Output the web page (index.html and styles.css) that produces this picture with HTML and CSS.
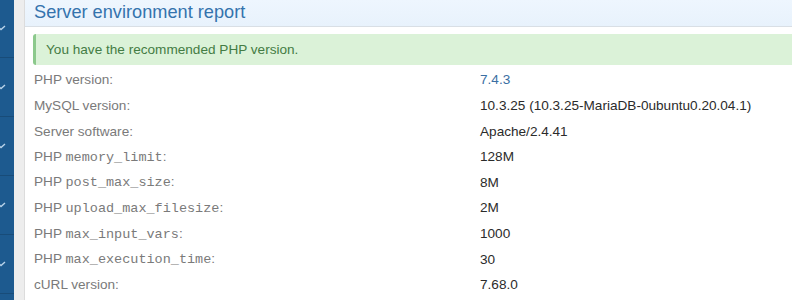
FILE: index.html
```html
<!DOCTYPE html>
<html>
<head>
<meta charset="utf-8">
<link rel="stylesheet" href="styles.css">
</head>
<body>
<div class="page">
  <nav class="sidebar">
    <div class="nav-item"><svg class="chev" viewBox="0 0 8 6"><polyline points="-3,1 1,4.5 5,1"/></svg></div>
    <div class="nav-item"><svg class="chev" viewBox="0 0 8 6"><polyline points="-3,1 1,4.5 5,1"/></svg></div>
    <div class="nav-item"><svg class="chev" viewBox="0 0 8 6"><polyline points="-3,1 1,4.5 5,1"/></svg></div>
    <div class="nav-item"><svg class="chev" viewBox="0 0 8 6"><polyline points="-3,1 1,4.5 5,1"/></svg></div>
    <div class="nav-item"><svg class="chev" viewBox="0 0 8 6"><polyline points="-3,1 1,4.5 5,1"/></svg></div>
  </nav>
  <div class="gutter"></div>
  <main class="panel">
    <h1 class="panel-title">Server environment report</h1>
    <div class="alert">You have the recommended PHP version.</div>
    <div class="report">
      <div class="label">PHP version:</div><div class="value link">7.4.3</div>
      <div class="label">MySQL version:</div><div class="value">10.3.25 (10.3.25-MariaDB-0ubuntu0.20.04.1)</div>
      <div class="label">Server software:</div><div class="value">Apache/2.4.41</div>
      <div class="label">PHP <code>memory_limit</code>:</div><div class="value">128M</div>
      <div class="label">PHP <code>post_max_size</code>:</div><div class="value">8M</div>
      <div class="label">PHP <code>upload_max_filesize</code>:</div><div class="value">2M</div>
      <div class="label">PHP <code>max_input_vars</code>:</div><div class="value">1000</div>
      <div class="label">PHP <code>max_execution_time</code>:</div><div class="value">30</div>
      <div class="label">cURL version:</div><div class="value">7.68.0</div>
    </div>
  </main>
</div>
</body>
</html>
```

FILE: styles.css
```css
html, body {
  margin: 0;
  padding: 0;
  background: #fff;
}
body {
  font-family: "Liberation Sans", Arial, sans-serif;
  overflow: hidden;
}
.page {
  display: flex;
  height: 300px;
}
.sidebar {
  width: 14px;
  flex: none;
  background: #1d5a8f;
  display: flex;
  flex-direction: column;
  margin-top: -1px;
}
.nav-item {
  height: 58px;
  flex: none;
  border-bottom: 1px solid #184c79;
  display: flex;
  align-items: center;
}
.chev {
  width: 8px;
  height: 6px;
  fill: none;
  stroke: #b9d3ea;
  stroke-width: 1.4;
}
.gutter {
  width: 10px;
  flex: none;
  background: #ededed;
}
.panel {
  flex: 1;
  border-left: 1px solid #dcdcdc;
  min-width: 0;
}
.panel-title {
  margin: 0;
  height: 26px;
  line-height: 24px;
  padding-left: 9px;
  font-size: 18.2px;
  font-weight: normal;
  color: #3473ad;
  background: linear-gradient(#eef6fe, #e8f2fc);
  border-bottom: 1px solid #d9dfe5;
}
.alert {
  margin: 7px 0 0 8px;
  height: 31px;
  line-height: 31px;
  padding-left: 10px;
  border-left: 3px solid #8cc98c;
  border-radius: 3px 0 0 3px;
  background: #dbf2d8;
  color: #447c44;
  font-size: 13.6px;
}
.report {
  display: grid;
  grid-template-columns: 446px 1fr;
  grid-auto-rows: 25.625px;
  align-items: center;
  padding-left: 9px;
  margin-top: 2px;
  font-size: 13.6px;
}
.label {
  color: #7a7a7a;
}
.label code {
  font-family: "Liberation Mono", "Courier New", monospace;
  font-size: 13.5px;
}
.value {
  color: #2b2b2b;
}
.value.link {
  color: #3b6fa3;
}
```
